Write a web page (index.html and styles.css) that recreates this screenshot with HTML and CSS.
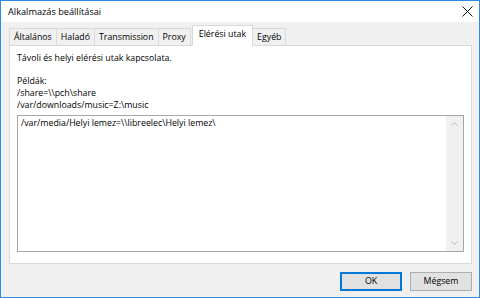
FILE: index.html
```html
<!DOCTYPE html>
<html lang="hu">
<head>
<meta charset="utf-8">
<title>Alkalmazás beállításai</title>
<link rel="stylesheet" href="styles.css">
</head>
<body>
<div class="window">
  <div class="titlebar">
    <span class="title">Alkalmazás beállításai</span>
    <span class="close">
      <svg width="11" height="11" viewBox="0 0 11 11"><path d="M0.5 0.5 L10.5 10.5 M10.5 0.5 L0.5 10.5" stroke="#111" stroke-width="1" fill="none"/></svg>
    </span>
  </div>
  <div class="content">
    <div class="tabs">
      <div class="tab first">Általános</div>
      <div class="tab">Haladó</div>
      <div class="tab">Transmission</div>
      <div class="tab">Proxy</div>
      <div class="tab active">Elérési utak</div>
      <div class="tab">Egyéb</div>
    </div>
    <div class="panel">
      <p class="desc">Távoli és helyi elérési utak kapcsolata.</p>
      <p class="examples">Példák:<br>/share=\\pch\share<br>/var/downloads/music=Z:\music</p>
      <div class="textarea">
        <div class="text">/var/media/Helyi lemez=\\libreelec\Helyi lemez\</div>
        <div class="scrollbar">
          <svg class="arrow" width="7" height="4" viewBox="0 0 7 4"><path d="M0.5 3.5 L3.5 0.5 L6.5 3.5" stroke="#b6b6b6" fill="none"/></svg>
          <svg class="arrow" width="7" height="4" viewBox="0 0 7 4"><path d="M0.5 0.5 L3.5 3.5 L6.5 0.5" stroke="#b6b6b6" fill="none"/></svg>
        </div>
      </div>
    </div>
    <div class="buttons">
      <div class="btn default">OK</div>
      <div class="btn">Mégsem</div>
    </div>
  </div>
</div>
</body>
</html>
```
FILE: styles.css
```css
* { box-sizing: border-box; }
html, body { margin: 0; padding: 0; }
body {
  font-family: "Open Sans", "Noto Sans", sans-serif;
  font-size: 8.8px;
  color: #000;
  background: #fff;
}
.window {
  width: 480px;
  height: 298px;
  border: 1px solid #2f8be0;
  display: flex;
  flex-direction: column;
  background: #f0f0f0;
}
.titlebar {
  height: 21px;
  background: #fff;
  display: flex;
  align-items: center;
  justify-content: space-between;
  padding-left: 7px;
  padding-right: 6px;
  flex: none;
}
.title { font-size: 9.2px; line-height: 12px; }
.close { display: flex; width: 11px; height: 11px; }
.content {
  flex: 1;
  display: flex;
  flex-direction: column;
  padding: 3px 7px 7px 8px;
}
.tabs {
  display: flex;
  align-items: flex-end;
  height: 21px;
  position: relative;
  z-index: 1;
}
.tab {
  height: 18px;
  padding: 0 4px;
  border: 1px solid #d9d9d9;
  border-left: none;
  background: #f0f0f0;
  line-height: 16px;
  white-space: nowrap;
}
.tab.first { border-left: 1px solid #d9d9d9; }
.tab.active {
  height: 21px;
  background: #fff;
  border-left: 1px solid #d9d9d9;
  border-bottom: 1px solid #fff;
  margin-left: 1px;
  padding: 0 6px 0 6px;
  line-height: 17px;
}
.panel {
  flex: none;
  height: 219px;
  margin-top: -1px;
  width: 463px;
  background: #fff;
  border: 1px solid #d9d9d9;
  padding: 6px 8px 10px 7px;
}
.desc { margin: 0; line-height: 12px; }
.examples { margin: 11px 0 0 0; line-height: 12px; }
.textarea {
  margin-top: 4px;
  height: 137px;
  width: 447px;
  border: 1px solid #a7a7a7;
  background: #fff;
  display: flex;
}
.text {
  flex: 1;
  padding: 1px 3px;
  line-height: 12px;
}
.scrollbar {
  width: 17px;
  background: #f0f0f0;
  display: flex;
  flex-direction: column;
  justify-content: space-between;
  align-items: center;
  padding: 6px 0 6px 0;
}
.buttons {
  display: flex;
  justify-content: flex-end;
  gap: 8px;
  margin-top: 8px;
}
.btn {
  width: 62px;
  height: 19px;
  background: #e1e1e1;
  border: 1px solid #adadad;
  text-align: center;
  line-height: 17px;
}
.btn.default {
  border: 2px solid #0078d7;
  line-height: 15px;
}
```
